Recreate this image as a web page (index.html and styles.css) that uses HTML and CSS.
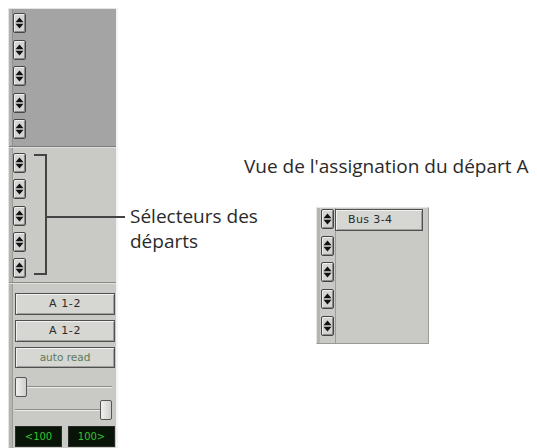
FILE: index.html
```html
<!DOCTYPE html>
<html lang="fr">
<head>
<meta charset="utf-8">
<title>Sélecteurs des départs</title>
<link rel="stylesheet" href="styles.css">
</head>
<body>
<svg class="defs" width="0" height="0" aria-hidden="true">
  <symbol id="arr" viewBox="0 0 11 18">
    <polygon points="5.5,3.5 1.5,8.3 9.5,8.3" fill="#111"/>
    <polygon points="1.5,9.7 9.5,9.7 5.5,14.5" fill="#111"/>
  </symbol>
</svg>
<div class="page">
  <div class="strip">
    <div class="sec-dark">
      <div class="sel"><svg><use href="#arr"/></svg></div>
      <div class="sel"><svg><use href="#arr"/></svg></div>
      <div class="sel"><svg><use href="#arr"/></svg></div>
      <div class="sel"><svg><use href="#arr"/></svg></div>
      <div class="sel"><svg><use href="#arr"/></svg></div>
    </div>
    <div class="sec-sends">
      <div class="sel"><svg><use href="#arr"/></svg></div>
      <div class="sel"><svg><use href="#arr"/></svg></div>
      <div class="sel"><svg><use href="#arr"/></svg></div>
      <div class="sel"><svg><use href="#arr"/></svg></div>
      <div class="sel"><svg><use href="#arr"/></svg></div>
      <div class="bracket"></div>
      <div class="leader"></div>
    </div>
    <div class="sec-bottom">
      <div class="btn">A 1-2</div>
      <div class="btn">A 1-2</div>
      <div class="btn auto">auto read</div>
      <div class="slider first"><div class="thumb"></div></div>
      <div class="slider end"><div class="thumb"></div></div>
      <div class="disps">
        <div class="disp">&lt;100</div>
        <div class="disp">100&gt;</div>
      </div>
    </div>
  </div>
  <div class="label">Sélecteurs des<br>départs</div>
  <div class="right">
    <div class="title">Vue de l'assignation du départ A</div>
    <div class="panel">
      <div class="prow">
        <div class="sel"><svg><use href="#arr"/></svg></div>
        <div class="bus">Bus 3-4</div>
      </div>
      <div class="prow"><div class="sel"><svg><use href="#arr"/></svg></div></div>
      <div class="prow"><div class="sel"><svg><use href="#arr"/></svg></div></div>
      <div class="prow"><div class="sel"><svg><use href="#arr"/></svg></div></div>
      <div class="prow"><div class="sel"><svg><use href="#arr"/></svg></div></div>
    </div>
  </div>
</div>
</body>
</html>
```

FILE: styles.css
```css
html, body {
  margin: 0;
  padding: 0;
  background: #ffffff;
  overflow: hidden;
}
body {
  padding: 8px 0 0 8px;
  height: 448px;
  box-sizing: border-box;
  font-family: "Open Sans", "Noto Sans", sans-serif;
  color: #2a2a2a;
}
.defs {
  position: absolute;
  width: 0;
  height: 0;
}
.page {
  display: grid;
  grid-template-columns: 110px 126px 1fr;
  align-items: start;
}

/* ---------- channel strip ---------- */
.strip {
  width: 110px;
  height: 445px;
  display: flex;
  flex-direction: column;
  box-sizing: border-box;
  border-top: 1px solid #e4e4e4;
  border-left: 1px solid #e4e4e4;
  border-right: 2px solid #f4f4f4;
}
.sel {
  width: 13px;
  height: 20px;
  box-sizing: border-box;
  border: 1px solid #454545;
  border-radius: 2px;
  background: #d4d4d2;
  box-shadow: inset 1px 1px 0 #efefef, inset -1px -1px 0 #8a8a8a;
  flex: none;
}
.sel svg {
  display: block;
  width: 11px;
  height: 18px;
}
.sec-dark {
  height: 138px;
  box-sizing: border-box;
  background: linear-gradient(to right, #b2b2b2 0, #b2b2b2 3px, #8e8e8e 3px, #8e8e8e 4px, #a4a4a4 4px);
  padding: 4px 0 0 4px;
  display: flex;
  flex-direction: column;
  gap: 6.6px;
  border-bottom: 1px solid #7c7c7c;
}
.sec-sends {
  position: relative;
  height: 136px;
  box-sizing: border-box;
  background: linear-gradient(to right, #b4b4b0 0, #b4b4b0 3px, #9c9c98 3px, #9c9c98 4px, #c9c9c5 4px);
  padding: 5px 0 0 4px;
  display: flex;
  flex-direction: column;
  gap: 6.3px;
  border-top: 1px solid #e0e0dc;
  border-bottom: 1px solid #8a8a86;
}
.bracket {
  position: absolute;
  left: 25px;
  top: 6px;
  width: 13px;
  height: 121px;
  box-sizing: border-box;
  border: 2px solid #444;
  border-left: none;
}
.leader {
  position: absolute;
  left: 37px;
  top: 68px;
  width: 79px;
  height: 2px;
  background: #444;
}
.sec-bottom {
  flex: 1;
  background: linear-gradient(to right, #b4b4b0 0, #b4b4b0 3px, #9c9c98 3px, #9c9c98 4px, #c9c9c5 4px);
  border-top: 1px solid #e0e0dc;
  padding: 9px 0 0 6px;
  display: flex;
  flex-direction: column;
  gap: 5px;
}
.btn {
  width: 100px;
  height: 22px;
  box-sizing: border-box;
  border: 1px solid #505050;
  background: #d6d6d2;
  box-shadow: inset 1px 1px 0 #f2f2f0, inset -1px -1px 0 #a0a09c;
  font-family: "DejaVu Sans", sans-serif;
  font-size: 11px;
  letter-spacing: 0.6px;
  line-height: 20px;
  text-align: center;
  color: #2a2a2a;
}
.btn.auto {
  color: #5a7a5a;
  height: 21px;
  line-height: 19px;
  font-size: 10.5px;
  letter-spacing: 0;
}
.slider {
  width: 97px;
  height: 22px;
  display: flex;
  align-items: center;
  background: linear-gradient(to bottom, transparent 0, transparent 10px, #8c8c88 10px, #8c8c88 11px, #ececea 11px, #ececea 12px, transparent 12px);
}
.slider.first {
  margin-top: 3px;
}
.slider.end {
  justify-content: flex-end;
  margin-top: -4px;
}
.thumb {
  width: 12px;
  height: 20px;
  box-sizing: border-box;
  border: 1px solid #555;
  border-radius: 2px;
  background: linear-gradient(to right, #f0f0ee, #cfcfcb);
}
.disps {
  display: flex;
  gap: 6px;
  margin-top: 0;
}
.disp {
  width: 47px;
  height: 21px;
  box-sizing: border-box;
  background: #081408;
  border: 1px solid #2a2a2a;
  color: #33c233;
  font-family: "DejaVu Sans", sans-serif;
  font-size: 10px;
  line-height: 19px;
  text-align: center;
}

/* ---------- annotation ---------- */
.label {
  padding: 196px 0 0 12px;
  font-size: 19px;
  line-height: 25px;
  white-space: nowrap;
}

/* ---------- right side ---------- */
.right {
  padding-top: 146px;
}
.title {
  font-size: 19px;
  line-height: 24px;
  white-space: nowrap;
}
.panel {
  margin: 29px 0 0 72px;
  width: 113px;
  height: 137px;
  box-sizing: border-box;
  background: linear-gradient(to right, #b4b4b0 0, #b4b4b0 3px, #c9c9c5 3px, #c9c9c5 18px, #9c9c98 18px, #9c9c98 19px, #c9c9c5 19px);
  border: 1px solid #e6e6e2;
  border-right-color: #9a9a96;
  border-bottom-color: #9a9a96;
  padding: 1px 0 0 4px;
  display: flex;
  flex-direction: column;
  gap: 6.7px;
}
.prow {
  display: flex;
  gap: 1px;
  height: 20px;
}
.bus {
  width: 88px;
  height: 22px;
  box-sizing: border-box;
  border: 1px solid #505050;
  background: #d6d6d2;
  box-shadow: inset 1px 1px 0 #f2f2f0, inset -1px -1px 0 #a0a09c;
  font-family: "DejaVu Sans", sans-serif;
  font-size: 11px;
  letter-spacing: 0.4px;
  line-height: 20px;
  padding-left: 12px;
  color: #2a2a2a;
}
```
